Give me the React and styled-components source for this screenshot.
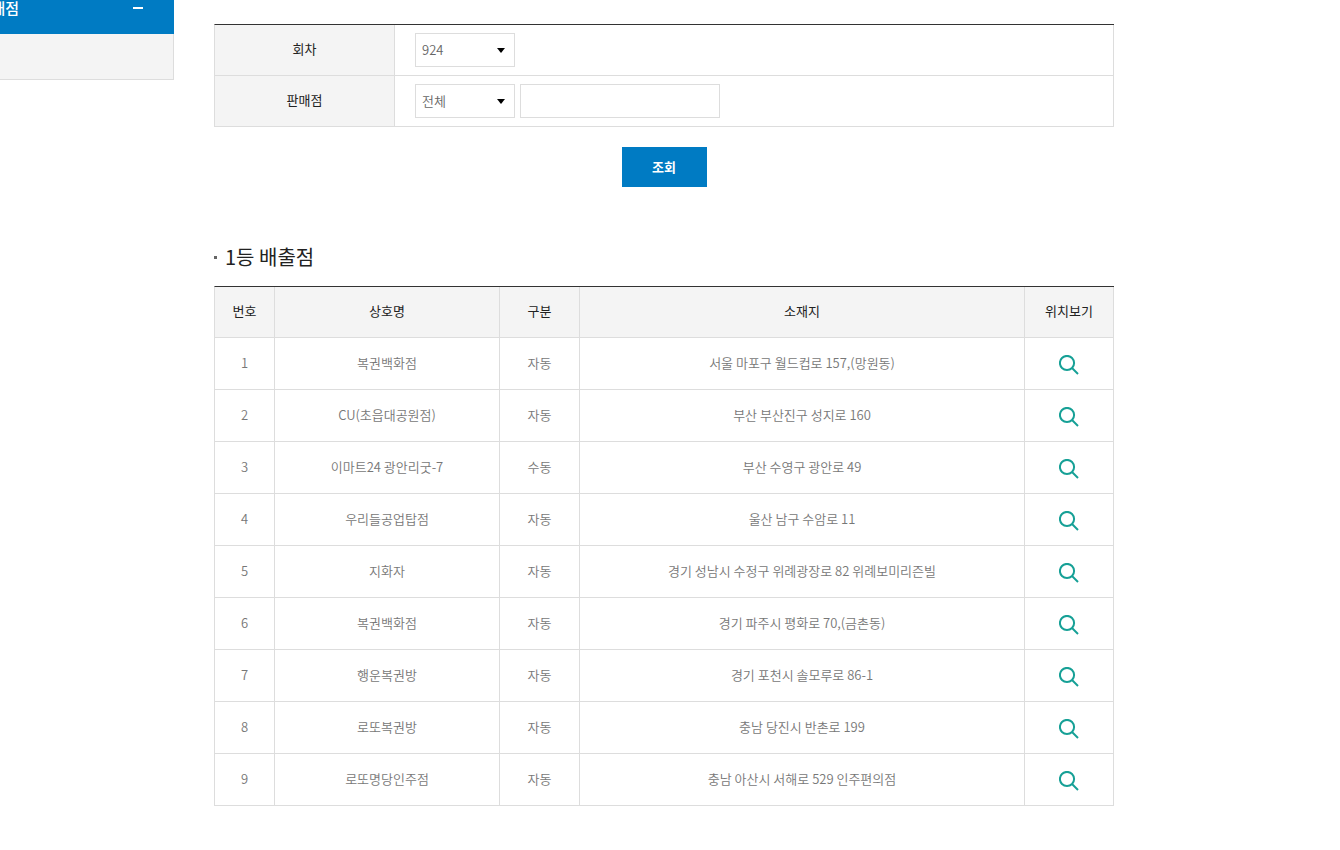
import { useState } from 'react';
import styled, { createGlobalStyle } from 'styled-components';

const lojas = [
    { nome: "복권백화점", tipo: "자동", endereco: "서울 마포구 월드컵로 157,(망원동)" },
    { nome: "CU(초읍대공원점)", tipo: "자동", endereco: "부산 부산진구 성지로 160" },
    { nome: "이마트24 광안리굿-7", tipo: "수동", endereco: "부산 수영구 광안로 49" },
    { nome: "우리들공업탑점", tipo: "자동", endereco: "울산 남구 수암로 11" },
    { nome: "지화자", tipo: "자동", endereco: "경기 성남시 수정구 위례광장로 82 위례보미리즌빌" },
    { nome: "복권백화점", tipo: "자동", endereco: "경기 파주시 평화로 70,(금촌동)" },
    { nome: "행운복권방", tipo: "자동", endereco: "경기 포천시 솔모루로 86-1" },
    { nome: "로또복권방", tipo: "자동", endereco: "충남 당진시 반촌로 199" },
    { nome: "로또명당인주점", tipo: "자동", endereco: "충남 아산시 서해로 529 인주편의점" },
]

function Lupa() {
    return (
        <svg width="20" height="20" viewBox="0 0 20 20" fill="none" stroke="#16a096" strokeWidth="2" aria-hidden="true">
            <circle cx="8" cy="8" r="7.1" />
            <path d="M13 13L19 19" />
        </svg>
    )
}

export default function App() {
    const [loja, setLoja] = useState("")

    return (
        <>
            <GlobalStyle />
            <Pagina>
                <Lateral>
                    <MenuTitulo type="button" aria-expanded="true">
                        <span>판매점</span>
                        <Menos />
                    </MenuTitulo>
                    <SubMenu />
                </Lateral>

                <Conteudo>
                    <form onSubmit={(e) => e.preventDefault()}>
                        <Tabela>
                            <colgroup>
                                <Coluna $largura={180} />
                                <col />
                            </colgroup>
                            <tbody>
                                <Linha $altura={51}>
                                    <Titulo scope="row"><label htmlFor="rodada">회차</label></Titulo>
                                    <Filtro>
                                        <Campos>
                                            <Caixa>
                                                <Selecao id="rodada"><option>924</option></Selecao>
                                            </Caixa>
                                        </Campos>
                                    </Filtro>
                                </Linha>
                                <Linha $altura={51}>
                                    <Titulo scope="row"><label htmlFor="regiao">판매점</label></Titulo>
                                    <Filtro>
                                        <Campos>
                                            <Caixa>
                                                <Selecao id="regiao"><option>전체</option></Selecao>
                                            </Caixa>
                                            <Entrada aria-label="판매점" value={loja} onChange={(e) => setLoja(e.target.value)} />
                                        </Campos>
                                    </Filtro>
                                </Linha>
                            </tbody>
                        </Tabela>
                        <Buscar type="submit">조회</Buscar>
                    </form>

                    <Cabecalho>1등 배출점</Cabecalho>
                    <Tabela>
                        <colgroup>
                            <Coluna $largura={60} />
                            <Coluna $largura={225} />
                            <Coluna $largura={80} />
                            <col />
                            <Coluna $largura={89} />
                        </colgroup>
                        <thead>
                            <Linha $altura={51}>
                                <Titulo scope="col">번호</Titulo>
                                <Titulo scope="col">상호명</Titulo>
                                <Titulo scope="col">구분</Titulo>
                                <Titulo scope="col">소재지</Titulo>
                                <Titulo scope="col">위치보기</Titulo>
                            </Linha>
                        </thead>
                        <tbody>
                            {lojas.map((l, index) => (
                                <Linha key={index} $altura={52}>
                                    <Celula>{index + 1}</Celula>
                                    <Celula>{l.nome}</Celula>
                                    <Celula>{l.tipo}</Celula>
                                    <Celula>{l.endereco}</Celula>
                                    <Celula $icone>
                                        <VerMapa href="#mapa" aria-label={l.nome + " 위치보기"}><Lupa /></VerMapa>
                                    </Celula>
                                </Linha>
                            ))}
                        </tbody>
                    </Tabela>
                </Conteudo>
            </Pagina>
        </>
    )
}

const GlobalStyle = createGlobalStyle`
    * {
        box-sizing: border-box;
    }
    body {
        margin: 0;
        background-color: #ffffff;
    }
    body, button, input, select {
        font-family: 'Noto Sans CJK KR', 'Noto Sans', sans-serif;
        font-size: 13px;
        font-weight: 350;
    }
`
const Pagina = styled.div`
    display: flex;
    align-items: flex-start;
    gap: 40px;
    padding-right: 40px;
`
const Lateral = styled.aside`
    flex: 0 0 174px;
    overflow: hidden;
`
const MenuTitulo = styled.button`
    display: flex;
    justify-content: flex-end;
    gap: 114px;
    width: 100%;
    height: 34px;
    padding: 0 31px 0 0;
    border: none;
    background-color: #007bc3;
    color: white;
    font-size: 15px;
    font-weight: 500;
    line-height: 16px;
    white-space: nowrap;
`
const Menos = styled.i`
    flex: none;
    width: 10px;
    height: 2px;
    margin-top: 7px;
    background-color: white;
`
const SubMenu = styled.div`
    height: 46px;
    background-color: #f4f4f4;
    border: solid #dddddd;
    border-width: 0 1px 1px 0;
`
const Conteudo = styled.main`
    flex: 1;
    max-width: 900px;
    padding: 24px 0 44px;
`
const Tabela = styled.table`
    width: 100%;
    table-layout: fixed;
    border-collapse: separate;
    border-spacing: 0;
    border-top: 1px solid #333333;
    border-left: 1px solid #dddddd;
`
const Coluna = styled.col`
    width: ${props => props.$largura}px;
`
const Linha = styled.tr`
    height: ${props => props.$altura}px;
`
const Titulo = styled.th`
    padding: 0 0 3px;
    border: solid #dddddd;
    border-width: 0 1px 1px 0;
    background-color: #f4f4f4;
    color: #222222;
    font-weight: 400;
    text-align: center;
`
const Celula = styled.td`
    padding: ${props => props.$icone ? "2px 0 0" : "0 0 3px"};
    border: solid #dddddd;
    border-width: 0 1px 1px 0;
    color: #777777;
    text-align: center;
`
const Filtro = styled.td`
    padding: 0 20px;
    border: solid #dddddd;
    border-width: 0 1px 1px 0;
`
const Campos = styled.div`
    display: flex;
    gap: 5px;
`
const Caixa = styled.div`
    position: relative;
    width: 100px;

    &::after {
        content: "";
        position: absolute;
        top: 15px;
        right: 10px;
        border: solid transparent;
        border-width: 5px 4px 0;
        border-top-color: black;
        pointer-events: none;
    }
`
const Selecao = styled.select`
    appearance: none;
    display: block;
    width: 100%;
    height: 34px;
    padding: 0 6px 2px;
    border: 1px solid #dddddd;
    border-radius: 0;
    background-color: white;
    color: #666666;
`
const Entrada = styled.input`
    width: 200px;
    height: 34px;
    padding: 0 6px;
    border: 1px solid #dddddd;
    color: #666666;
`
const Buscar = styled.button`
    display: block;
    width: 85px;
    height: 40px;
    margin: 20px auto 0;
    padding: 0 0 2px;
    border: none;
    background-color: #007bc3;
    color: white;
    font-weight: 700;
`
const Cabecalho = styled.h3`
    display: flex;
    align-items: center;
    gap: 8px;
    margin: 55px 0 14px;
    color: #222222;
    font-size: 20px;
    font-weight: 400;
    line-height: 30px;

    &::before {
        content: "";
        width: 3px;
        height: 3px;
        background-color: #666666;
    }
`
const VerMapa = styled.a`
    display: inline-block;
    vertical-align: middle;
    height: 20px;
`
